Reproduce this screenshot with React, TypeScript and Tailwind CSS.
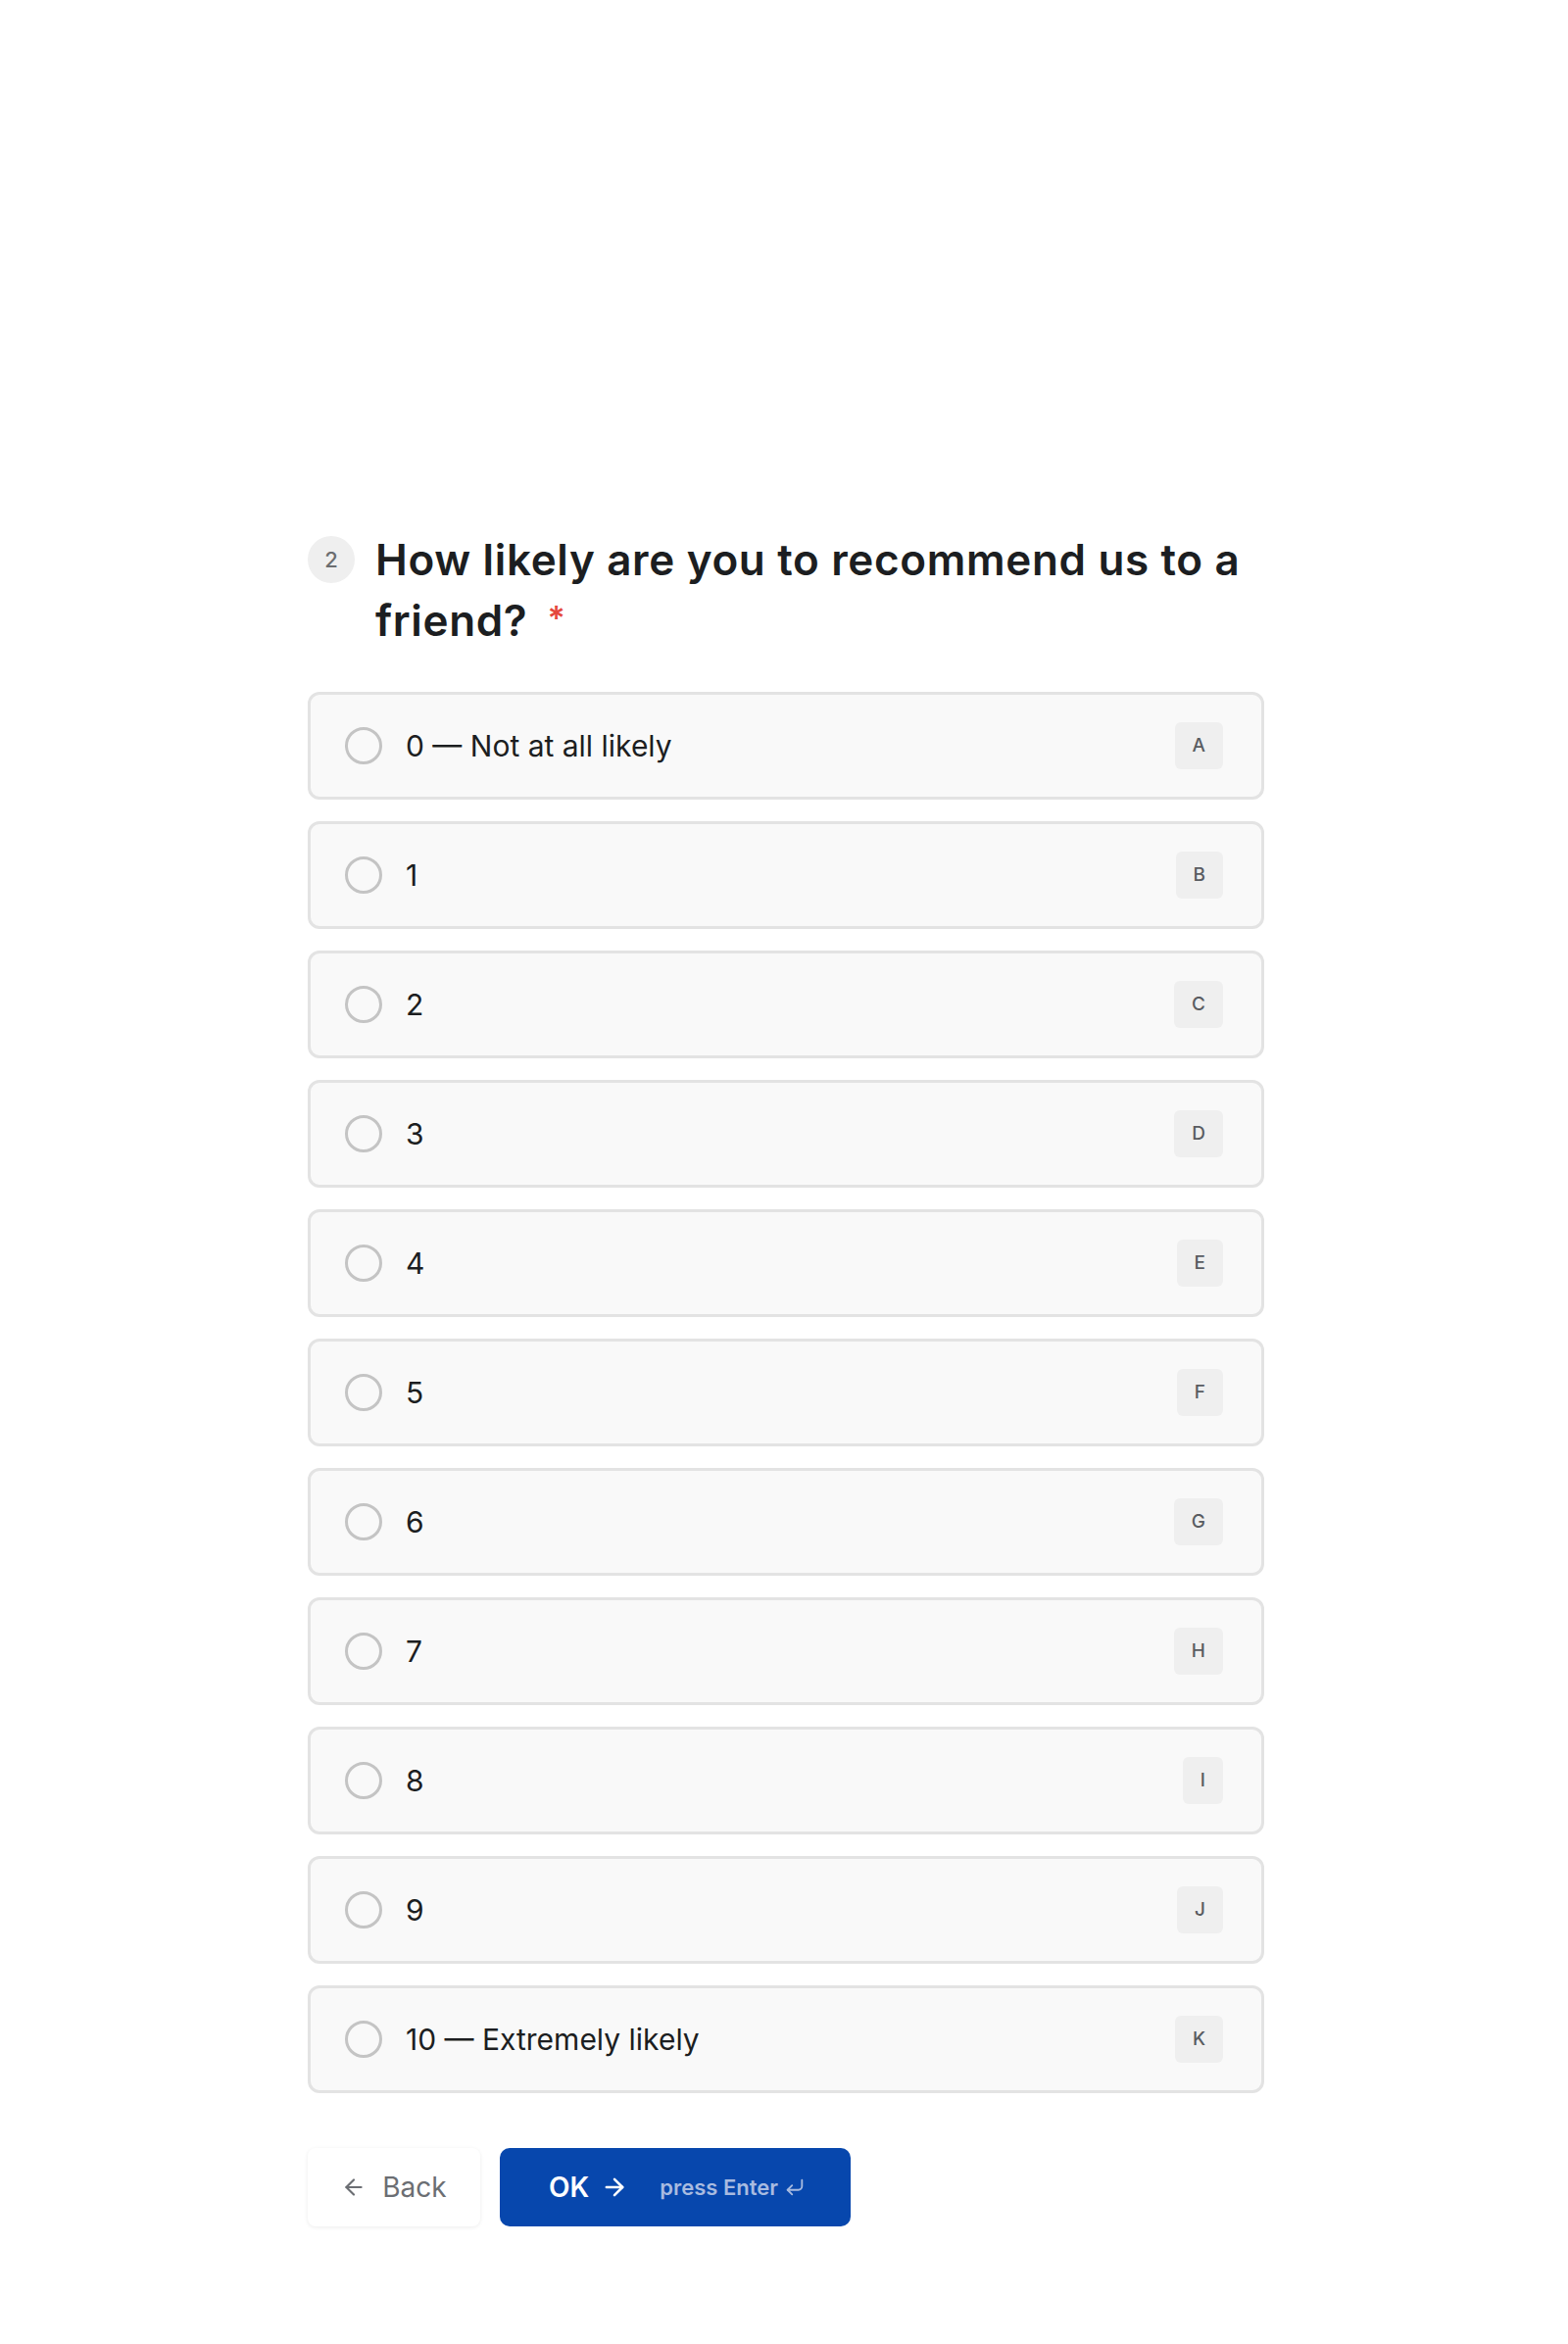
import React from 'react';
import { ArrowLeft, ArrowRight, CornerDownLeft } from 'lucide-react';

const options = [
  { label: '0 — Not at all likely', key: 'A' },
  { label: '1', key: 'B' },
  { label: '2', key: 'C' },
  { label: '3', key: 'D' },
  { label: '4', key: 'E' },
  { label: '5', key: 'F' },
  { label: '6', key: 'G' },
  { label: '7', key: 'H' },
  { label: '8', key: 'I' },
  { label: '9', key: 'J' },
  { label: '10 — Extremely likely', key: 'K' },
];

const App: React.FC = () => {
  return (
    <div className="min-h-[2392px] bg-white font-['Inter','Noto_Sans',sans-serif] text-[#1c1e21]">
      <div className="ml-[314px] w-[976px] pt-[540px]">
        {/* Question header */}
        <div className="flex items-start gap-[21px]">
          <div className="mt-[7px] flex h-12 w-12 shrink-0 items-center justify-center rounded-full bg-[#efefef] text-[22px] font-medium text-[#6b6d70]">
            2
          </div>
          <h1 className="text-[44px] font-semibold leading-[62px] tracking-[0.015em] text-[#1c1e21]">
            <span>How likely are you to recommend us to a</span> <span>friend?</span>
            <span className="relative -top-[6px] ml-[20px] text-[34px] text-[#e5483d]">*</span>
          </h1>
        </div>

        {/* Options */}
        <div className="mt-[38px] flex flex-col gap-[22px]">
          {options.map((opt) => (
            <div
              key={opt.key}
              className="flex h-[110px] items-center rounded-[12px] border-[3px] border-[#e3e3e3] bg-[#f9f9f9] pl-[35px] pr-[39px]"
            >
              <div className="h-[38px] w-[38px] shrink-0 rounded-full border-[3px] border-[#c4c4c4]" />
              <span className="ml-[24px] text-[30px] leading-none text-[#1c1e21]">{opt.label}</span>
              <span className="ml-auto flex h-[48px] items-center rounded-[6px] bg-[#efefef] px-[18px] text-[19px] font-medium text-[#595c61]">
                {opt.key}
              </span>
            </div>
          ))}
        </div>

        {/* Actions */}
        <div className="mt-[56px] flex items-center gap-[20px]">
          <button className="flex h-[80px] w-[176px] items-center justify-center gap-[16px] rounded-[8px] bg-white text-[28px] text-[#6b6e73] shadow-[0_1px_4px_rgba(0,0,0,0.08)]">
            <ArrowLeft size={26} strokeWidth={2} />
            <span>Back</span>
          </button>
          <button className="flex h-[80px] items-center rounded-[10px] bg-[#0747ad] pl-[50px] pr-[46px] text-white">
            <span className="text-[28px] font-semibold">OK</span>
            <ArrowRight size={28} strokeWidth={2.2} className="ml-[12px]" />
            <span className="ml-[32px] text-[22px] font-semibold text-[#a8bbe0]">press Enter</span>
            <CornerDownLeft size={22} strokeWidth={2} className="ml-[6px] text-[#a8bbe0]" />
          </button>
        </div>
      </div>
    </div>
  );
};

export default App;
